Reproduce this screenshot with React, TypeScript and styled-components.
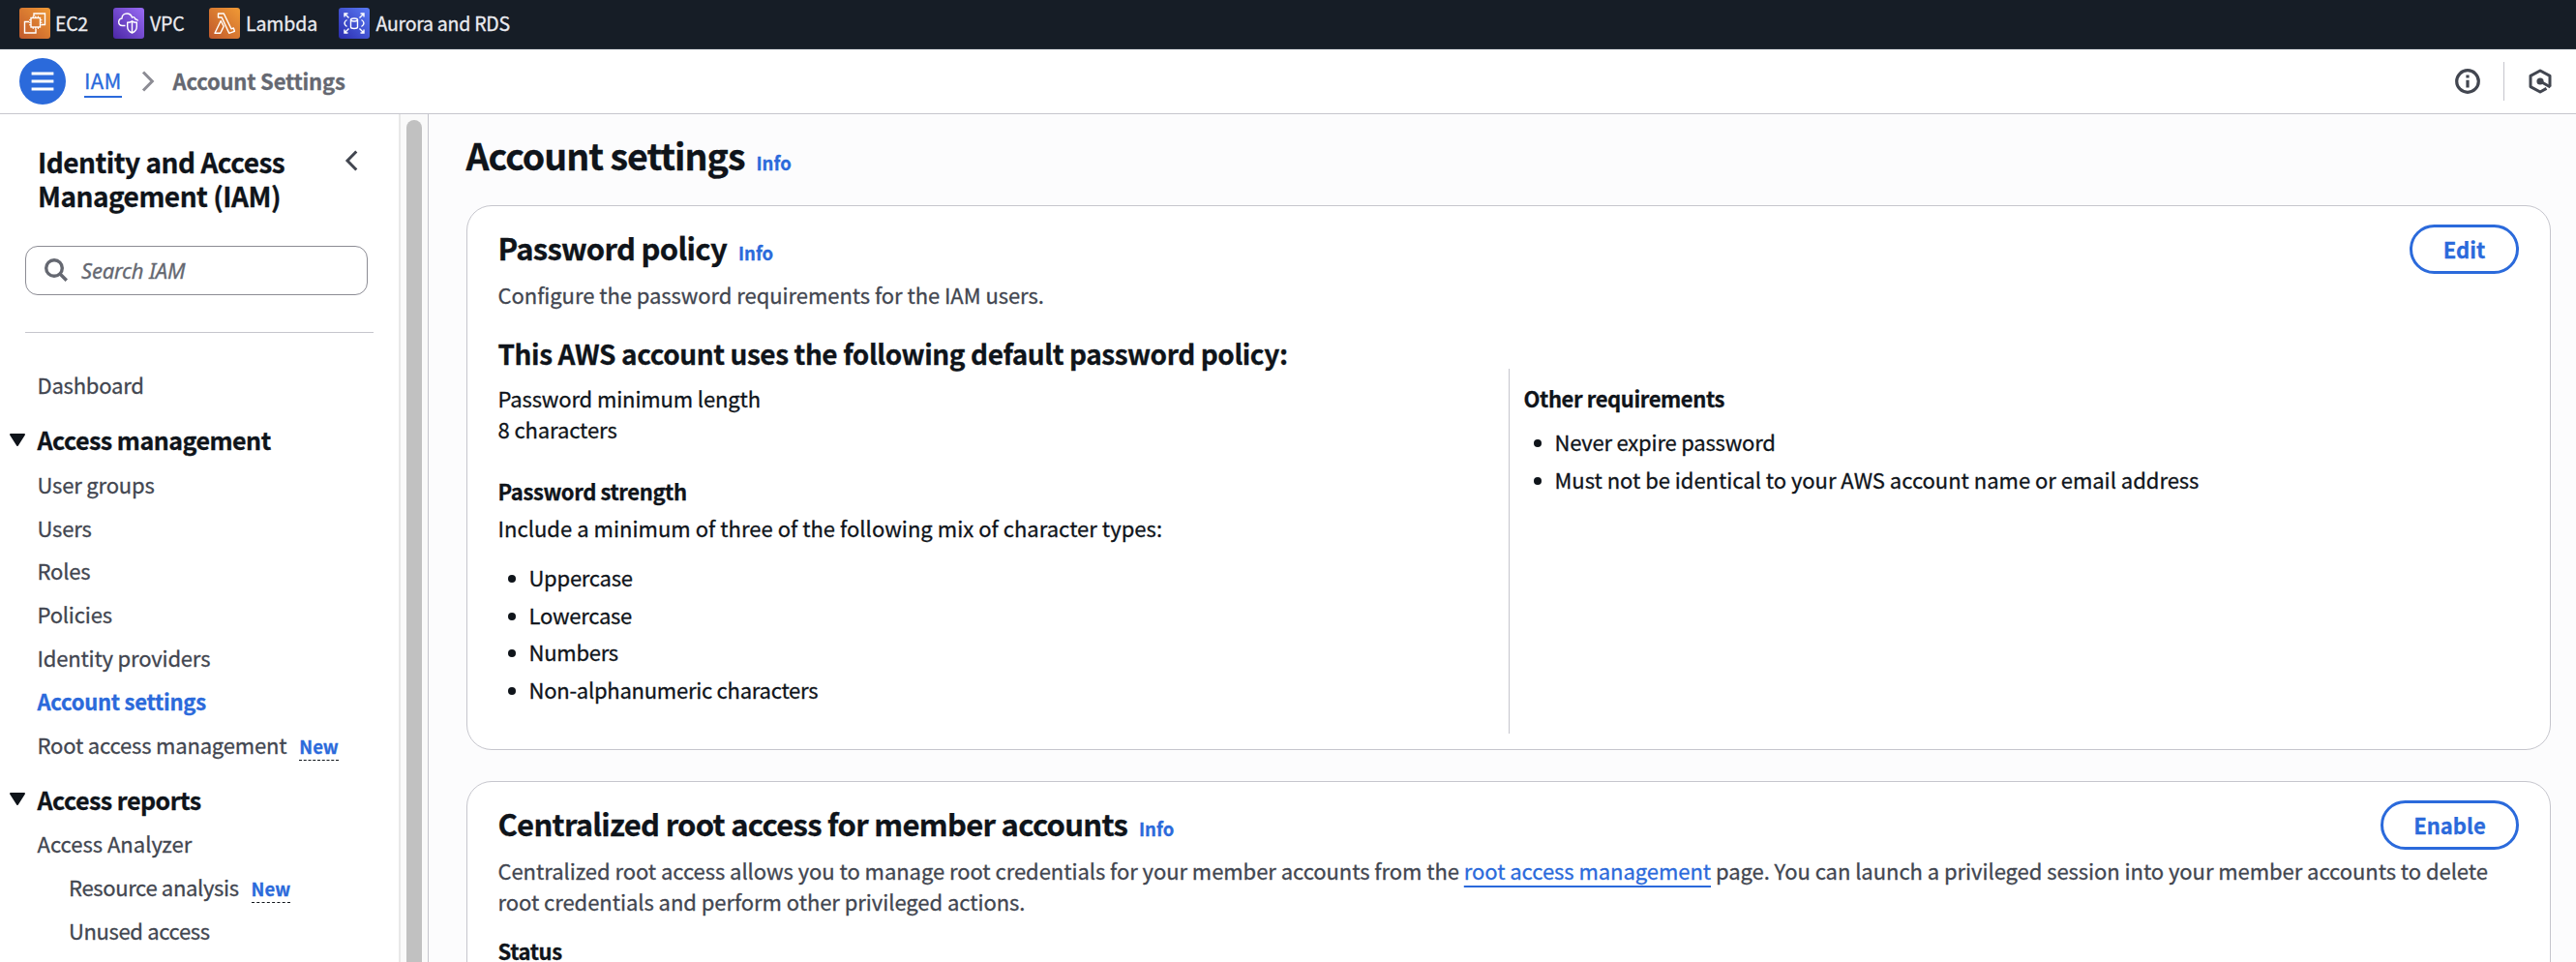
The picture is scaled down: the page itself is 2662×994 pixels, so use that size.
import React from 'react';
import styled, { createGlobalStyle } from 'styled-components';

const ink = '#0f141a';
const body = '#424650';
const muted = '#656871';
const blue = '#2b6adb';
const line = '#c6c6cd';

const GlobalStyle = createGlobalStyle`
  * { box-sizing: border-box; }
  html, body, ul, h1, h2, h3, p { margin: 0; padding: 0; }
  body {
    width: 2662px;
    height: 994px;
    overflow: hidden;
    background: #fcfcfd;
    color: ${ink};
    font-family: "Noto Sans CJK SC", "Noto Sans", sans-serif;
    font-size: 22px;
    line-height: 32px;
    white-space: nowrap;
    -webkit-text-stroke: 0.3px currentColor;
  }
`;

const Page = styled.div`
  display: flex;
  flex-direction: column;
  height: 994px;
  overflow: hidden;
`;

/* ---------- favourites bar ---------- */

const ServiceBar = styled.nav`
  display: flex;
  align-items: flex-start;
  height: 51px;
  padding: 8px 0 0 20px;
  background: #161d26;
  border-bottom: 1px solid #2a323e;
`;

const Service = styled.a<{ $width: number; $gap: number; $tracking: number }>`
  display: flex;
  width: ${p => p.$width}px;
  height: 32px;
  gap: ${p => p.$gap}px;
  color: #ebebf0;
  font-size: 19.5px;
  line-height: 32px;
  letter-spacing: ${p => p.$tracking}px;

  svg { flex: none; border-radius: 3px; }
`;

/* ---------- breadcrumb bar ---------- */

const Header = styled.header`
  display: flex;
  align-items: center;
  flex: none;
  height: 67px;
  padding: 0 25px 0 20px;
  background: #fff;
  border-bottom: 1px solid ${line};
`;

const MenuButton = styled.button`
  display: flex;
  align-items: center;
  justify-content: center;
  width: 48px;
  height: 48px;
  padding: 0;
  border: 0;
  border-radius: 50%;
  background: ${blue};
`;

const CrumbLink = styled.a`
  height: 34px;
  margin: 0 20px 0 19px;
  color: ${blue};
  border-bottom: 2px solid ${blue};
  line-height: 31px;
  letter-spacing: 0.3px;
`;

const CrumbCurrent = styled.span`
  margin: 0 0 3px 19px;
  color: ${muted};
  font-weight: 700;
  letter-spacing: -0.2px;
`;

const HeaderTools = styled.div`
  display: flex;
  align-items: center;
  margin-left: auto;
`;

const ToolDivider = styled.i`
  width: 1px;
  height: 40px;
  margin: 0 25px 0 24px;
  background: ${line};
`;

/* ---------- side navigation ---------- */

const Body = styled.div`
  display: flex;
  flex: 1;
  min-height: 0;
`;

const Sidebar = styled.aside`
  width: 412px;
  flex: none;
  overflow: hidden;
  background: #fff;
`;

const SideTitle = styled.div`
  display: flex;
  justify-content: space-between;
  padding: 32px 42px 0 39px;
  font-size: 28px;
  font-weight: 700;
  line-height: 34.6px;
  letter-spacing: -0.5px;

  svg { margin-top: 5px; }
`;

const SearchBox = styled.div`
  display: flex;
  align-items: center;
  gap: 14px;
  width: 354px;
  height: 51px;
  margin: 35px 0 0 26px;
  padding: 0 0 2px 19px;
  border: 1px solid #8c8c94;
  border-radius: 13px;
  color: ${muted};
  font-family: "Noto Sans", sans-serif;
  font-size: 22px;
  font-style: italic;
  letter-spacing: -0.2px;
`;

const SideRule = styled.hr`
  width: 360px;
  height: 1px;
  margin: 38px 0 31px 26px;
  border: 0;
  background: ${line};
`;

const NavItem = styled.a<{ $active?: boolean; $indent?: boolean; $tracking?: number }>`
  display: flex;
  align-items: baseline;
  height: 44.8px;
  padding-left: ${p => (p.$indent ? 71 : 38.5)}px;
  color: ${p => (p.$active ? blue : body)};
  font-weight: ${p => (p.$active ? 700 : 400)};
  line-height: 44.8px;
  letter-spacing: ${p => p.$tracking ?? -0.18}px;
`;

const NavSection = styled.div`
  display: flex;
  align-items: center;
  gap: 12.5px;
  height: 57.8px;
  padding: 11px 0 0 10px;
  font-size: 25px;
  font-weight: 700;
  letter-spacing: -0.5px;
`;

const NewTag = styled.span`
  height: 29px;
  margin-left: 13px;
  color: ${blue};
  border-bottom: 1px dashed ${ink};
  font-size: 18.5px;
  font-weight: 700;
  line-height: 28px;
  letter-spacing: 0;
`;

const ScrollTrack = styled.div`
  display: flex;
  width: 31px;
  flex: none;
  padding: 6px 0 0 6px;
  background: #fafafa;
  border-left: 2px solid #e8e8e8;
  border-right: 1px solid ${line};
`;

const ScrollThumb = styled.div`
  width: 16px;
  border-radius: 8px 8px 0 0;
  background: #c1c1c1;
`;

/* ---------- content ---------- */

const Main = styled.main`
  flex: 1;
  padding: 19px 26px 0 38.5px;
`;

const PageTitle = styled.h1`
  height: 48px;
  margin-bottom: 27px;
  font-size: 37.5px;
  line-height: 46px;
  letter-spacing: -1px;
`;

const Info = styled.a`
  margin-left: 12px;
  color: ${blue};
  font-size: 18.5px;
  font-weight: 700;
  line-height: 1;
  letter-spacing: 0;
`;

const Card = styled.section`
  height: 563px;
  margin-bottom: 32px;
  padding: 19px 32px 0;
  background: #fff;
  border: 1px solid ${line};
  border-radius: 26px;
`;

const CardHeader = styled.div`
  display: flex;
  justify-content: space-between;
  height: 56px;
`;

const CardTitle = styled.h2`
  font-size: 31px;
  line-height: 48px;
  letter-spacing: -0.72px;
`;

const ActionButton = styled.button<{ $width: number }>`
  width: ${p => p.$width}px;
  height: 51px;
  padding: 0 0 2px;
  border: 3px solid ${blue};
  border-radius: 26px;
  background: #fff;
  color: ${blue};
  font: 700 22px "Noto Sans CJK SC", "Noto Sans", sans-serif;
  letter-spacing: 0;
`;

const Description = styled.p`
  color: ${body};
  letter-spacing: -0.05px;

  span { display: block; }
`;

const InlineLink = styled.a`
  color: ${blue};
  text-decoration: underline;
  text-decoration-thickness: 2px;
  text-underline-offset: 6px;
  text-decoration-skip-ink: none;
`;

const PolicyTitle = styled.h3`
  margin-top: 30px;
  font-size: 28px;
  line-height: 31px;
  letter-spacing: -0.43px;
`;

const Columns = styled.div`
  display: flex;
  height: 377px;
`;

const Column = styled.div<{ $second?: boolean }>`
  width: ${p => (p.$second ? 1040 : 1044)}px;
  padding: 14px 0 0 ${p => (p.$second ? 15 : 0)}px;
  border-left: ${p => (p.$second ? `1px solid ${line}` : '0')};
`;

const Text = styled.p<{ $tracking?: number }>`
  letter-spacing: ${p => p.$tracking ?? 0}px;
`;

const Label = styled.p<{ $top?: number; $bottom?: number }>`
  margin: ${p => p.$top ?? 0}px 0 ${p => p.$bottom ?? 0}px;
  font-weight: 700;
  letter-spacing: -0.4px;
`;

const Bullets = styled.ul<{ $top: number }>`
  margin-top: ${p => p.$top}px;
  list-style: none;
`;

const Bullet = styled.li<{ $tracking?: number }>`
  display: flex;
  align-items: center;
  height: 38.5px;
  letter-spacing: ${p => p.$tracking ?? -0.25}px;

  &::before {
    content: "";
    width: 8px;
    height: 8px;
    margin: 4px 14px 0 10px;
    border-radius: 50%;
    background: ${ink};
  }
`;

/* ---------- drawings ---------- */

type TileProps = { id: string; from: string; to: string; children: React.ReactNode };

const Tile = ({ id, from, to, children }: TileProps) => (
  <svg width="32" height="32" viewBox="0 0 32 32" fill="none" stroke="#fff" strokeWidth="1.4">
    <defs>
      <linearGradient id={id} x1="0" y1="1" x2="1" y2="0">
        <stop offset="0" stopColor={from} />
        <stop offset="1" stopColor={to} />
      </linearGradient>
    </defs>
    <rect width="32" height="32" fill={`url(#${id})`} stroke="none" />
    {children}
  </svg>
);

const Ec2Icon = () => (
  <Tile id="ec2" from="#c0582c" to="#f09a35">
    <path d="M15 9V6h11.5v11.5H23M10 14.500H5.500V26H17v-4" />
    <rect x="12" y="10.500" width="9.500" height="9.500" />
    <path d="M14.200 8.500v2M16.800 8.500v2M19.400 8.500v2M14.200 20v2M16.800 20v2M19.400 20v2M10 12.700h2M10 15.200h2M10 17.800h2M21.500 12.700h2M21.500 15.200h2M21.500 17.800h2" strokeWidth="1.100" />
  </Tile>
);

const VpcIcon = () => (
  <Tile id="vpc" from="#4b27a5" to="#9a6cf5">
    <path d="M12.500 18.500H9.500C7 18.500 5.700 16.800 5.700 14.800c0-2 1.300-3.500 3.300-3.800C9 8 11.300 6 14 6c2.800 0 4.700 1.500 5.500 4 1.200-.8 3-.3 3.300 1.700 1.300.2 2.300.8 2.900 1.800" />
    <path d="M19.500 13.800c1.500 1 3 1.400 4.800 1.500v4.200c0 3-1.600 5.200-4.800 6.500-3.200-1.300-4.800-3.500-4.800-6.500v-4.200c1.800-.1 3.300-.5 4.800-1.500zM19.500 14v12" />
  </Tile>
);

const LambdaIcon = () => (
  <Tile id="lambda" from="#c0582c" to="#f09a35">
    <path d="M9.500 6h5.800l7.700 15.800 2.400-.8 1 3.300-5.700 2L13.200 10H9.500zM12.200 13.500 6 26.300h5.800l3.400-7z" strokeLinejoin="round" />
  </Tile>
);

const RdsIcon = () => (
  <Tile id="rds" from="#2b2cae" to="#5a7bf5">
    <path d="M10.500 10.500 6 6M6 9.500V6h3.500M21.500 10.500 26 6M26 9.500V6h-3.500M10.500 21.500 6 26M6 22.500V26h3.500M21.500 21.500 26 26M26 22.500V26h-3.500" />
    <path d="M8.500 12.500Q6 14 6 16t2.500 3.500M23.500 12.500Q26 14 26 16t-2.500 3.500" />
    <ellipse cx="16" cy="12.500" rx="3.500" ry="1.500" />
    <path d="M12.500 12.500v7.500q0 1.500 3.500 1.500t3.500-1.500v-7.500" />
  </Tile>
);

const MenuIcon = () => (
  <svg width="24" height="22" viewBox="0 0 24 22" stroke="#fff" strokeWidth="3.200">
    <path d="M.6 3h22.800M.6 11h22.800M.6 19h22.800" />
  </svg>
);

const CrumbChevron = () => (
  <svg width="14" height="24" viewBox="0 0 14 24" fill="none" stroke="#8c8c94" strokeWidth="3">
    <path d="M2 2.500 11.300 12 2 21.500" />
  </svg>
);

const CollapseIcon = () => (
  <svg width="14" height="22" viewBox="0 0 14 22" fill="none" stroke={body} strokeWidth="3">
    <path d="M12.300 1.500 3 11l9.300 9.500" />
  </svg>
);

const SearchIcon = () => (
  <svg width="24" height="24" viewBox="0 0 24 24" fill="none" stroke={muted} strokeWidth="3.400">
    <circle cx="10" cy="10" r="8.300" />
    <path d="m15.800 15.800 7 7" />
  </svg>
);

const CaretIcon = () => (
  <svg width="16" height="13" viewBox="0 0 16 13" fill={ink} stroke={ink} strokeWidth="2" strokeLinejoin="round">
    <path d="M1 1h14L8 12z" />
  </svg>
);

const InfoIcon = () => (
  <svg width="26" height="26" viewBox="0 0 26 26" fill="none" stroke={body} strokeWidth="3.200">
    <circle cx="13" cy="13" r="11.300" />
    <path d="M13 11.800v7.600M13 6.600v3" />
  </svg>
);

const HexIcon = () => (
  <svg width="24" height="26" viewBox="0 0 24 26" fill="none" stroke={body} strokeWidth="3">
    <path d="M22 18.500V7.400L12 2 2 7.400v11.200L12 24l6.500-3.600" strokeLinejoin="round" />
    <path d="m12 13 10.500 6" />
    <circle cx="12" cy="13" r="3.600" fill={body} stroke="none" />
  </svg>
);

export default function App() {
  return (
    <Page>
      <GlobalStyle />
      <ServiceBar>
        <Service $width={97} $gap={5} $tracking={-0.3}><Ec2Icon />EC2</Service>
        <Service $width={99} $gap={6} $tracking={-0.2}><VpcIcon />VPC</Service>
        <Service $width={134} $gap={6} $tracking={-0.1}><LambdaIcon />Lambda</Service>
        <Service $width={190} $gap={6.5} $tracking={-0.25}><RdsIcon />Aurora and RDS</Service>
      </ServiceBar>
      <Header>
        <MenuButton aria-label="Menu"><MenuIcon /></MenuButton>
        <CrumbLink>IAM</CrumbLink>
        <CrumbChevron />
        <CrumbCurrent>Account Settings</CrumbCurrent>
        <HeaderTools>
          <InfoIcon />
          <ToolDivider />
          <HexIcon />
        </HeaderTools>
      </Header>
      <Body>
        <Sidebar>
          <SideTitle>
            <span>Identity and Access<br />Management (IAM)</span>
            <CollapseIcon />
          </SideTitle>
          <SearchBox><SearchIcon />Search IAM</SearchBox>
          <SideRule />
          <NavItem $tracking={-0.2}>Dashboard</NavItem>
          <NavSection><CaretIcon />Access management</NavSection>
          <NavItem>User groups</NavItem>
          <NavItem>Users</NavItem>
          <NavItem>Roles</NavItem>
          <NavItem>Policies</NavItem>
          <NavItem>Identity providers</NavItem>
          <NavItem $active $tracking={-0.25}>Account settings</NavItem>
          <NavItem>Root access management<NewTag>New</NewTag></NavItem>
          <NavSection><CaretIcon />Access reports</NavSection>
          <NavItem $tracking={0}>Access Analyzer</NavItem>
          <NavItem $indent $tracking={-0.35}>Resource analysis<NewTag>New</NewTag></NavItem>
          <NavItem $indent $tracking={-0.35}>Unused access</NavItem>
        </Sidebar>
        <ScrollTrack><ScrollThumb /></ScrollTrack>
        <Main>
          <PageTitle>Account settings<Info>Info</Info></PageTitle>
          <Card>
            <CardHeader>
              <CardTitle>Password policy<Info>Info</Info></CardTitle>
              <ActionButton $width={113}>Edit</ActionButton>
            </CardHeader>
            <Description>Configure the password requirements for the IAM users.</Description>
            <PolicyTitle>This AWS account uses the following default password policy:</PolicyTitle>
            <Columns>
              <Column>
                <Text $tracking={-0.13}>Password minimum length</Text>
                <Text $tracking={-0.1}>8 characters</Text>
                <Label $top={32} $bottom={6}>Password strength</Label>
                <Text $tracking={0.03}>Include a minimum of three of the following mix of character types:</Text>
                <Bullets $top={16}>
                  <Bullet>Uppercase</Bullet>
                  <Bullet>Lowercase</Bullet>
                  <Bullet>Numbers</Bullet>
                  <Bullet>Non-alphanumeric characters</Bullet>
                </Bullets>
              </Column>
              <Column $second>
                <Label>Other requirements</Label>
                <Bullets $top={10}>
                  <Bullet $tracking={-0.2}>Never expire password</Bullet>
                  <Bullet $tracking={-0.02}>Must not be identical to your AWS account name or email address</Bullet>
                </Bullets>
              </Column>
            </Columns>
          </Card>
          <Card>
            <CardHeader>
              <CardTitle>Centralized root access for member accounts<Info>Info</Info></CardTitle>
              <ActionButton $width={143}>Enable</ActionButton>
            </CardHeader>
            <Description>
              <span>
                Centralized root access allows you to manage root credentials for your member accounts from the{' '}
                <InlineLink>root access management</InlineLink> page. You can launch a privileged session into your
                member accounts to delete
              </span>
              <span>root credentials and perform other privileged actions.</span>
            </Description>
            <Label $top={19}>Status</Label>
          </Card>
        </Main>
      </Body>
    </Page>
  );
}
